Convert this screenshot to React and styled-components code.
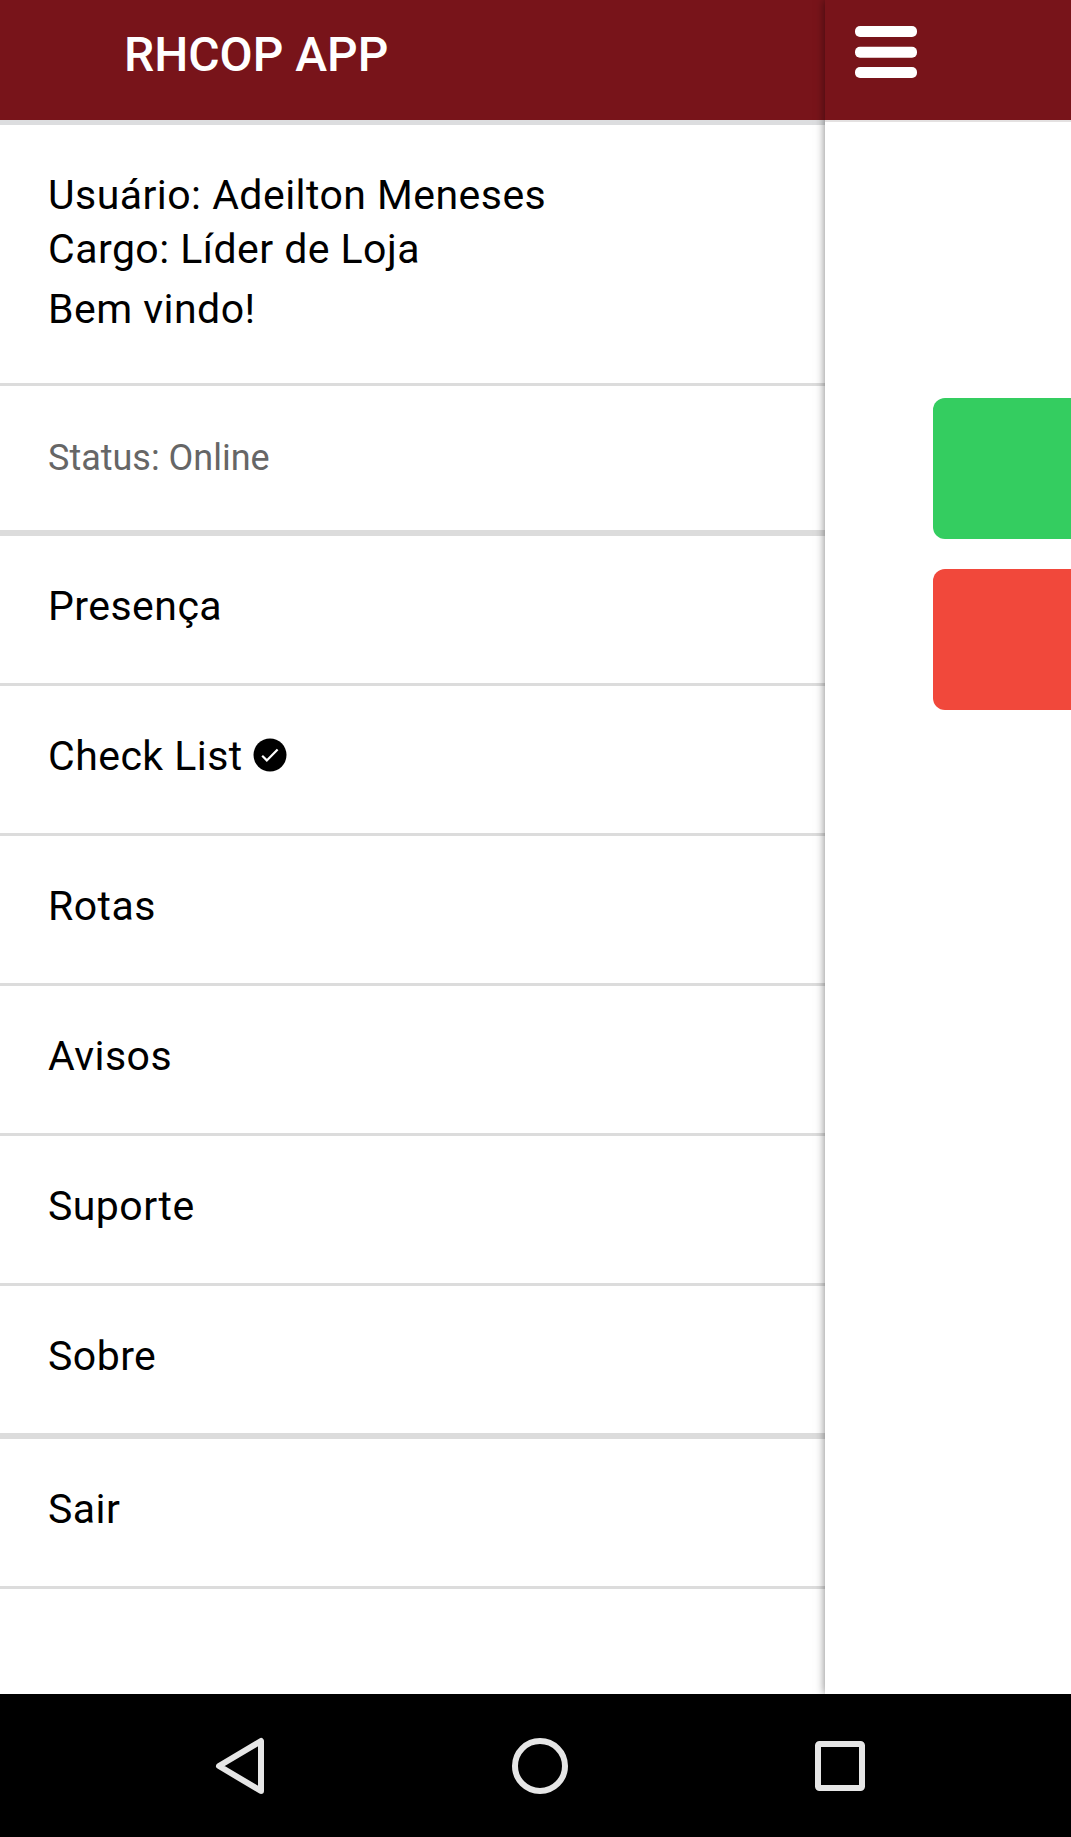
import React from 'react';
import styled, { createGlobalStyle } from 'styled-components';

const GlobalStyle = createGlobalStyle`
  * {
    box-sizing: border-box;
  }

  body {
    margin: 0;
    background-color: #fff;
    font-family: Roboto, sans-serif;
  }
`;

const Screen = styled.div`
  display: flex;
  flex-direction: column;
  width: 1071px;
  height: 1837px;
  overflow: hidden;
`;

const Panes = styled.div`
  display: flex;
  height: 1694px;
  overflow: hidden;
`;

const Drawer = styled.aside`
  width: 825px;
  background-color: #fff;
`;

const DrawerHeader = styled.header`
  height: 120px;
  padding: 27px 0 0 124px;
  background-color: #78141a;
`;

const Title = styled.h1`
  margin: 0;
  font-size: 48px;
  line-height: 56px;
  font-weight: 500;
  color: #fff;
`;

const UserCard = styled.section`
  height: 266px;
  padding: 43px 48px 0;
  border-top: 5px solid #dcdddf;
  border-bottom: 3px solid #dcdcdc;
`;

const UserLine = styled.p`
  margin: 0 0 ${(props) => props.$gap || 0}px;
  font-size: 41px;
  line-height: 54px;
  letter-spacing: 0.46px;
  color: #000;
`;

const Row = styled.div`
  display: flex;
  align-items: center;
  height: ${(props) => (props.$thick ? 153 : 150)}px;
  padding: 0 48px 7px;
  border-bottom: ${(props) => (props.$thick ? 6 : 3)}px solid #dcdcdc;
  font-size: 41px;
  letter-spacing: 0.46px;
  color: #000;
`;

const StatusRow = styled(Row)`
  height: 150px;
  padding-bottom: 0;
  font-size: 36px;
  letter-spacing: 0;
  color: #666;
`;

const CheckIcon = styled.svg`
  width: 34px;
  height: 34px;
  margin: 0 0 2px 10px;
`;

const Page = styled.main`
  flex: 1;
  z-index: 1;
  background-color: #fff;
  box-shadow: 0 0 9px rgba(0, 0, 0, 0.5);
`;

const PageHeader = styled.header`
  height: 122px;
  padding: 26px 0 0 30px;
  border-bottom: 2px solid #e4e1e1;
  background-color: #78141a;
`;

const MenuIcon = styled.svg`
  display: block;
  width: 62px;
  height: 52px;
`;

const Actions = styled.div`
  display: flex;
  flex-direction: column;
  gap: 30px;
  padding: 276px 0 0 108px;
`;

const ActionButton = styled.button`
  height: 141px;
  border: 0;
  border-radius: 12px 0 0 12px;
  background-color: ${(props) => props.$color};
`;

const NavBar = styled.nav`
  display: flex;
  justify-content: center;
  align-items: center;
  gap: 240px;
  height: 143px;
  padding-left: 9px;
  background-color: #000;
`;

const NavIcon = styled.svg`
  width: 60px;
  height: 60px;
  fill: none;
  stroke: #e6e6e6;
  stroke-width: 6;
  stroke-linejoin: round;
`;

const menuItems = [
    { label: 'Presença' },
    { label: 'Check List', checked: true },
    { label: 'Rotas' },
    { label: 'Avisos' },
    { label: 'Suporte' },
    { label: 'Sobre', thick: true },
    { label: 'Sair' },
];

function App() {
    return (
        <Screen>
            <GlobalStyle />
            <Panes>
                <Drawer>
                    <DrawerHeader>
                        <Title>RHCOP APP</Title>
                    </DrawerHeader>
                    <UserCard>
                        <UserLine>Usuário: Adeilton Meneses</UserLine>
                        <UserLine $gap={6}>Cargo: Líder de Loja</UserLine>
                        <UserLine>Bem vindo!</UserLine>
                    </UserCard>
                    <StatusRow $thick>Status: Online</StatusRow>
                    {menuItems.map((item) => (
                        <Row key={item.label} $thick={item.thick}>
                            {item.label}
                            {item.checked && (
                                <CheckIcon viewBox="0 0 34 34">
                                    <circle cx="17" cy="17" r="16.5" fill="#000" />
                                    <path d="M9.2 17.8l4.6 4.6L24.6 11.4" fill="none" stroke="#fff" strokeWidth="2.2" />
                                </CheckIcon>
                            )}
                        </Row>
                    ))}
                </Drawer>
                <Page>
                    <PageHeader>
                        <MenuIcon viewBox="0 0 62 52" fill="#fff">
                            <rect width="62" height="11" rx="5" />
                            <rect y="20.75" width="62" height="11" rx="5" />
                            <rect y="41" width="62" height="11" rx="5" />
                        </MenuIcon>
                    </PageHeader>
                    <Actions>
                        <ActionButton $color="#34cd60" />
                        <ActionButton $color="#f1483b" />
                    </Actions>
                </Page>
            </Panes>
            <NavBar>
                <NavIcon viewBox="0 0 60 60">
                    <path d="M51 5v50L9 30z" />
                </NavIcon>
                <NavIcon viewBox="0 0 60 60">
                    <circle cx="30" cy="30" r="25" />
                </NavIcon>
                <NavIcon viewBox="0 0 60 60">
                    <rect x="8" y="8" width="44" height="44" rx="1.5" />
                </NavIcon>
            </NavBar>
        </Screen>
    );
}

export default App;
